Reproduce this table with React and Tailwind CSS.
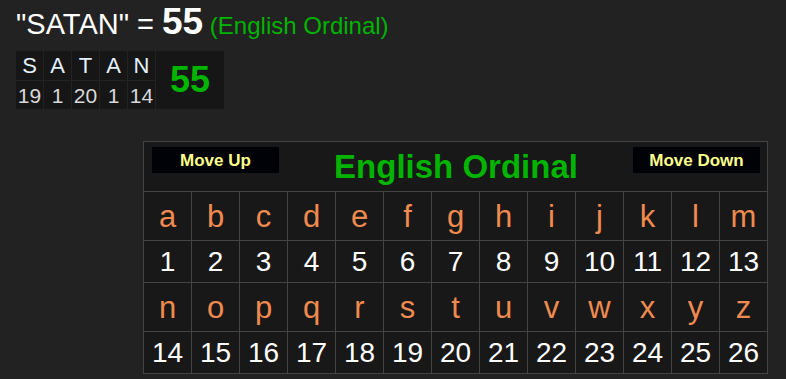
import React from "react";

const letters = "abcdefghijklmnopqrstuvwxyz".split("");

function LetterRow({ items }) {
  return (
    <div className="flex">
      {items.map((l) => (
        <div
          key={l}
          className="w-[48px] h-[49px] shrink-0 border-r border-b border-[#444444] flex items-center justify-center text-[31px] leading-none text-[#f08a4e]"
        >
          {l}
        </div>
      ))}
    </div>
  );
}

function NumberRow({ items }) {
  return (
    <div className="flex">
      {items.map((n) => (
        <div
          key={n}
          className="w-[48px] h-[42px] shrink-0 border-r border-b border-[#444444] flex items-center justify-center text-[28px] leading-none text-white"
        >
          {n}
        </div>
      ))}
    </div>
  );
}

export default function App() {
  const word = [
    ["S", 19],
    ["A", 1],
    ["T", 20],
    ["A", 1],
    ["N", 14],
  ];
  const first = letters.slice(0, 13);
  const second = letters.slice(13);
  return (
    <div
      className="w-[786px] h-[379px] bg-[#222222] pl-[16px] pt-[3px] overflow-hidden"
      style={{ fontFamily: '"Liberation Sans", Arial, sans-serif' }}
    >
      <div className="flex items-baseline leading-none h-[41px]">
        <span className="text-[29px] text-white">"SATAN" =&nbsp;</span>
        <span className="text-[37px] font-bold text-white">55</span>
        <span className="text-[24px] text-[#00b400]">&nbsp;(English Ordinal)</span>
      </div>

      <div className="mt-[7px] flex w-[208px] bg-[#161616]">
        {word.map(([l, n], i) => (
          <div key={i} className="w-[28px] shrink-0 border-r border-[#232323] flex flex-col">
            <div className="h-[30px] border-b border-[#232323] flex items-center justify-center text-[22px] leading-none text-[#e2f0ff]">
              {l}
            </div>
            <div className="h-[28px] flex items-center justify-center text-[21px] leading-none text-[#d9d9d9]">
              {n}
            </div>
          </div>
        ))}
        <div className="flex-1 flex items-center justify-center text-[36px] font-bold leading-none text-[#00b400]">
          55
        </div>
      </div>

      <div className="mt-[32px] ml-[127px] w-[625px] border-l border-t border-[#444444] bg-[#181818]">
        <div className="h-[50px] border-r border-b border-[#444444] flex items-center justify-between pl-[8px] pr-[7px]">
          <div className="self-start mt-[5px] w-[127px] h-[26px] bg-[#010208] flex items-center justify-center text-[17px] font-bold leading-none text-[#ffff8a]">
            Move Up
          </div>
          <div className="text-[33px] font-bold leading-none text-[#00b400]">English Ordinal</div>
          <div className="self-start mt-[5px] w-[127px] h-[26px] bg-[#010208] flex items-center justify-center text-[17px] font-bold leading-none text-[#ffff8a]">
            Move Down
          </div>
        </div>
        <LetterRow items={first} />
        <NumberRow items={first.map((_, i) => i + 1)} />
        <LetterRow items={second} />
        <NumberRow items={second.map((_, i) => i + 14)} />
      </div>
    </div>
  );
}
